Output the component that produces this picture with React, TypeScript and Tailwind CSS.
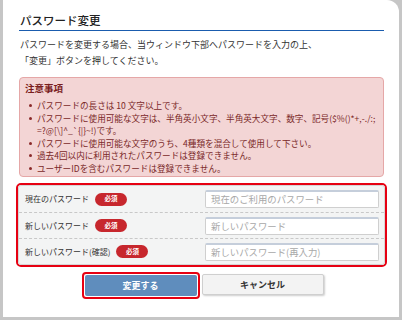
import React from "react";

const font = { fontFamily: '"Noto Sans CJK JP", "Noto Sans", sans-serif' };

const rows = [
  { label: "現在のパスワード", ph: "現在のご利用のパスワード" },
  { label: "新しいパスワード", ph: "新しいパスワード" },
  { label: "新しいパスワード(確認)", ph: "新しいパスワード(再入力)" },
];

const notes: React.ReactNode[] = [
  "パスワードの長さは 10 文字以上です。",
  <>
    <span className="whitespace-nowrap">
      パスワードに使用可能な文字は、半角英小文字、半角英大文字、数字、記号($%()*+,-./:;
    </span>
    <br />=?@[\]^_`{"{"}|{"}"}~!)です。
  </>,
  "パスワードに使用可能な文字のうち、4種類を混合して使用して下さい。",
  "過去4回以内に利用されたパスワードは登録できません。",
  "ユーザーIDを含むパスワードは登録できません。",
];

export default function App() {
  return (
    <div
      className="w-[402px] h-[320px] bg-[#c6c6c6] pl-[3px] pr-[3px] pb-[3px] overflow-hidden"
      style={font}
    >
      <div className="h-[317px] bg-white rounded-tr-[12px] pl-[16px] pr-[15px] flex flex-col">
        <div className="pt-[12px] pl-[1px] text-[11.5px] leading-[16px] text-[#222] font-medium">
          パスワード変更
        </div>
        <div className="mt-[2px] h-px bg-[#1a5cae]" />
        <div className="mt-[6px] pl-[1px] text-[9px] leading-[16px] text-[#333]">
          パスワードを変更する場合、当ウィンドウ下部へパスワードを入力の上、
          <br />
          「変更」ボタンを押してください。
        </div>
        <div className="mt-[8px] h-[100px] rounded-[4px] border border-[#e5a7a7] bg-[#f3d5d5] pl-[5px] pr-[4px] pt-[4px]">
          <div className="text-[9.5px] leading-[12px] font-bold text-[#7a1d1d]">注意事項</div>
          <ul className="mt-[5px] text-[8.6px] leading-[12.6px] text-[#7a2828]">
            {notes.map((n, i) => (
              <li key={i} className="flex">
                <span className="w-[12px] shrink-0 pl-[4px] pt-[5px]">
                  <span className="block w-[3px] h-[3px] rounded-full bg-[#8a2a2a]" />
                </span>
                <span>{n}</span>
              </li>
            ))}
          </ul>
        </div>
        <div className="mt-[6px] -ml-[3px] -mr-[3px] rounded-[5px] border-2 border-[#e60012]">
          <div className="rounded-[3px] border border-[#d6d6d6] bg-[#f3f4f4]">
            {rows.map((r, i) => (
              <div
                key={i}
                className={`flex items-center h-[26px] pl-[6px] pr-[5px] ${
                  i > 0 ? "border-t border-dashed border-[#c8c8c8]" : ""
                }`}
              >
                <div className="flex items-center flex-1 gap-[6px]">
                  <span className="text-[8px] text-[#333]">{r.label}</span>
                  <span className="w-[32px] h-[13px] rounded-full bg-[#c7272d] text-white text-[6.5px] font-bold flex items-center justify-center">
                    必須
                  </span>
                </div>
                <div className="w-[174px] h-[18px] bg-white border border-[#cfcfcf] border-t-2 border-t-[#c5cedb] rounded-[2px] flex items-center px-[5px] text-[9.4px] text-[#a8a8a8]">
                  {r.ph}
                </div>
              </div>
            ))}
          </div>
        </div>
        <div className="mt-[5px] flex justify-center items-start gap-[2px] pl-[2px]">
          <div className="rounded-[4px] border-2 border-[#e60012] p-px">
            <div className="w-[112px] h-[21px] rounded-[2px] bg-[#5f8dbd] text-white text-[9px] font-bold flex items-center justify-center">
              変更する
            </div>
          </div>
          <div className="mt-[2px] w-[122px] h-[21px] rounded-[2px] bg-[#f3f3f3] border border-[#cfcfcf] shadow-[1px_1px_2px_rgba(0,0,0,0.2)] text-[#333] text-[9px] font-bold flex items-center justify-center">
            キャンセル
          </div>
        </div>
      </div>
    </div>
  );
}
